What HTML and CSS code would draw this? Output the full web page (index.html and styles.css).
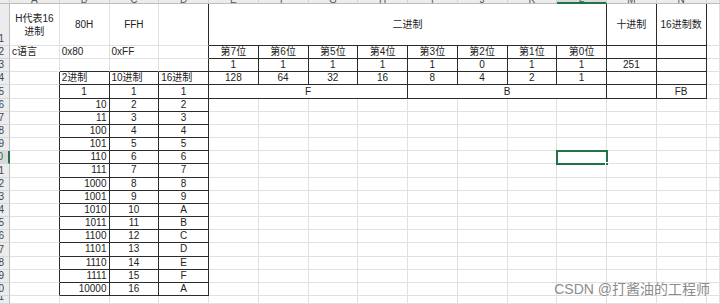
FILE: index.html
```html
<!DOCTYPE html>
<html lang="zh">
<head>
<meta charset="utf-8">
<title>Sheet</title>
<link rel="stylesheet" href="styles.css">
</head>
<body>
<div class="sheet">
  <div class="ch corner"></div><div class="ch"><span>A</span></div><div class="ch"><span>B</span></div><div class="ch"><span>C</span></div><div class="ch"><span>D</span></div><div class="ch"><span>E</span></div><div class="ch"><span>F</span></div><div class="ch"><span>G</span></div><div class="ch"><span>H</span></div><div class="ch"><span>I</span></div><div class="ch"><span>J</span></div><div class="ch"><span>K</span></div><div class="ch chsel"><span>L</span></div><div class="ch"><span>M</span></div><div class="ch"><span>N</span></div><div class="ch"></div>

  <div class="rh">1</div><div class="wrap">H代表16<br>进制</div><div>80H</div><div>FFH</div><div class="R"></div><div class="x s8">二进制</div><div class="x">十进制</div><div class="x">16进制数</div><div></div>

  <div class="rh">2</div><div class="l">c语言</div><div class="l">0x80</div><div class="l">0xFF</div><div class="R"></div><div class="x">第7位</div><div class="x">第6位</div><div class="x">第5位</div><div class="x">第4位</div><div class="x">第3位</div><div class="x">第2位</div><div class="x">第1位</div><div class="x">第0位</div><div class="x"></div><div class="x"></div><div></div>

  <div class="rh">3</div><div></div><div class="B"></div><div class="B"></div><div class="x"></div><div class="x">1</div><div class="x">1</div><div class="x">1</div><div class="x">1</div><div class="x">1</div><div class="x">0</div><div class="x">1</div><div class="x">1</div><div class="x">251</div><div class="x"></div><div></div>

  <div class="rh">4</div><div class="R"></div><div class="x l">2进制</div><div class="x l">10进制</div><div class="x l">16进制</div><div class="x">128</div><div class="x">64</div><div class="x">32</div><div class="x">16</div><div class="x">8</div><div class="x">4</div><div class="x">2</div><div class="x">1</div><div class="x"></div><div class="x"></div><div></div>

  <div class="rh">5</div><div class="R"></div><div class="x">1</div><div class="x">1</div><div class="x">1</div><div class="x s4">F</div><div class="x s4">B</div><div class="x"></div><div class="x">FB</div><div></div>

  <div class="rh">6</div><div class="R"></div><div class="x r">10</div><div class="x">2</div><div class="x">2</div><div></div><div></div><div></div><div></div><div></div><div></div><div></div><div></div><div></div><div></div><div></div>
  <div class="rh">7</div><div class="R"></div><div class="x r">11</div><div class="x">3</div><div class="x">3</div><div></div><div></div><div></div><div></div><div></div><div></div><div></div><div></div><div></div><div></div><div></div>
  <div class="rh">8</div><div class="R"></div><div class="x r">100</div><div class="x">4</div><div class="x">4</div><div></div><div></div><div></div><div></div><div></div><div></div><div></div><div></div><div></div><div></div><div></div>
  <div class="rh">9</div><div class="R"></div><div class="x r">101</div><div class="x">5</div><div class="x">5</div><div></div><div></div><div></div><div></div><div></div><div></div><div></div><div></div><div></div><div></div><div></div>
  <div class="rh rhsel">10</div><div class="R"></div><div class="x r">110</div><div class="x">6</div><div class="x">6</div><div></div><div></div><div></div><div></div><div></div><div></div><div></div><div class="sel"></div><div></div><div></div><div></div>
  <div class="rh">11</div><div class="R"></div><div class="x r">111</div><div class="x">7</div><div class="x">7</div><div></div><div></div><div></div><div></div><div></div><div></div><div></div><div></div><div></div><div></div><div></div>
  <div class="rh">12</div><div class="R"></div><div class="x r">1000</div><div class="x">8</div><div class="x">8</div><div></div><div></div><div></div><div></div><div></div><div></div><div></div><div></div><div></div><div></div><div></div>
  <div class="rh">13</div><div class="R"></div><div class="x r">1001</div><div class="x">9</div><div class="x">9</div><div></div><div></div><div></div><div></div><div></div><div></div><div></div><div></div><div></div><div></div><div></div>
  <div class="rh">14</div><div class="R"></div><div class="x r">1010</div><div class="x">10</div><div class="x">A</div><div></div><div></div><div></div><div></div><div></div><div></div><div></div><div></div><div></div><div></div><div></div>
  <div class="rh">15</div><div class="R"></div><div class="x r">1011</div><div class="x">11</div><div class="x">B</div><div></div><div></div><div></div><div></div><div></div><div></div><div></div><div></div><div></div><div></div><div></div>
  <div class="rh">16</div><div class="R"></div><div class="x r">1100</div><div class="x">12</div><div class="x">C</div><div></div><div></div><div></div><div></div><div></div><div></div><div></div><div></div><div></div><div></div><div></div>
  <div class="rh">17</div><div class="R"></div><div class="x r">1101</div><div class="x">13</div><div class="x">D</div><div></div><div></div><div></div><div></div><div></div><div></div><div></div><div></div><div></div><div></div><div></div>
  <div class="rh">18</div><div class="R"></div><div class="x r">1110</div><div class="x">14</div><div class="x">E</div><div></div><div></div><div></div><div></div><div></div><div></div><div></div><div></div><div></div><div></div><div></div>
  <div class="rh">19</div><div class="R"></div><div class="x r">1111</div><div class="x">15</div><div class="x">F</div><div></div><div></div><div></div><div></div><div></div><div></div><div></div><div></div><div></div><div></div><div></div>
  <div class="rh">20</div><div class="R"></div><div class="x r">10000</div><div class="x">16</div><div class="x">A</div><div></div><div></div><div></div><div></div><div></div><div></div><div></div><div></div><div></div><div></div><div></div>
  <div class="rh">21</div><div></div><div></div><div></div><div></div><div></div><div></div><div></div><div></div><div></div><div></div><div></div><div></div><div></div><div></div><div></div>
</div>
<div class="wm">CSDN @打酱油的工程师</div>
</body>
</html>
```
FILE: styles.css
```css
html, body {
  margin: 0;
  padding: 0;
  background: #fff;
}
body {
  width: 720px;
  height: 304px;
  overflow: hidden;
  position: relative;
  font-family: "Liberation Sans", "Noto Sans CJK SC", sans-serif;
  font-size: 10px;
  color: #222;
}
.sheet {
  display: grid;
  grid-template-columns: 10px repeat(14, 49.76px) 1fr;
  grid-template-rows: 4px 42px repeat(19, 13.158px) 1fr;
  width: 720px;
  height: 304px;
}
.sheet > div {
  box-sizing: border-box;
  border-right: 1px solid #e0e0e0;
  border-bottom: 1px solid #e0e0e0;
  display: flex;
  align-items: center;
  justify-content: center;
  padding: 0 2px;
  white-space: nowrap;
  overflow: hidden;
  line-height: 12px;
}
.sheet > .ch {
  background: #ececec;
  border-right-color: #d2d2d2;
  border-bottom-color: #bdbdbd;
  align-items: flex-end;
  color: #555;
  line-height: 10px;
}
.ch span {
  margin-bottom: -2px;
}
.sheet > .chsel {
  background: #d9d9d9;
  border-bottom: 2px solid #217346;
  color: #217346;
}
.sheet > .rh {
  background: #ececec;
  border-right-color: #bdbdbd;
  border-bottom-color: #d6d6d6;
  justify-content: flex-end;
  align-items: flex-end;
  padding: 0 5px 0 0;
  color: #3d4654;
  line-height: 12px;
}
.sheet > .rhsel {
  color: #217346;
  border-right: 2px solid #217346;
  background: #d9d9d9;
}
.sheet > .wrap {
  white-space: normal;
  text-align: center;
  line-height: 13px;
}
.sheet > .l { justify-content: flex-start; }
.sheet > .r { justify-content: flex-end; }
.sheet > .R { border-right-color: #2b2b2b; }
.sheet > .B { border-bottom-color: #2b2b2b; }
.sheet > .x {
  border-right-color: #2b2b2b;
  border-bottom-color: #2b2b2b;
}
.s8 { grid-column: span 8; }
.s4 { grid-column: span 4; }
.sheet > .sel {
  position: relative;
  z-index: 1;
  overflow: visible;
  outline: 2px solid #217346;
  outline-offset: -1px;
}
.sel::after {
  content: "";
  position: absolute;
  right: -3px;
  bottom: -3px;
  width: 4px;
  height: 4px;
  background: #217346;
  border: 1px solid #fff;
  box-sizing: border-box;
}
.wm {
  position: absolute;
  right: 10px;
  top: 281px;
  font-size: 14px;
  line-height: 16px;
  color: #8c8c8c;
  white-space: nowrap;
}
```
